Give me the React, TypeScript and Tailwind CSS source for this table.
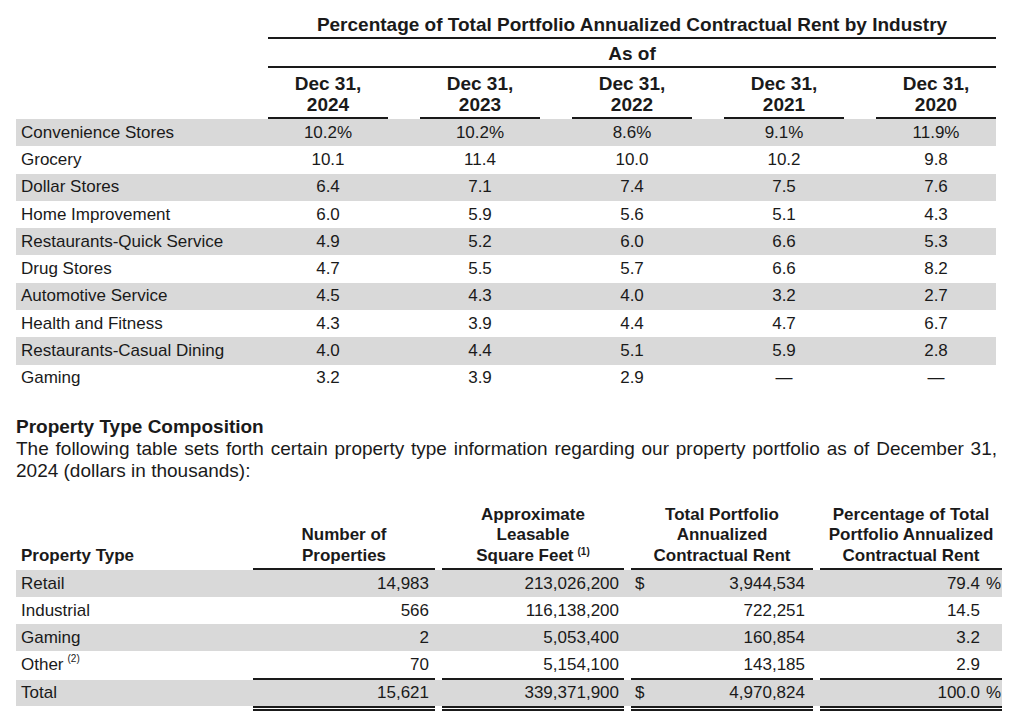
const years = ["2024", "2023", "2022", "2021", "2020"]

const industries: string[][] = [
  ["Convenience Stores", "10.2%", "10.2%", "8.6%", "9.1%", "11.9%"],
  ["Grocery", "10.1", "11.4", "10.0", "10.2", "9.8"],
  ["Dollar Stores", "6.4", "7.1", "7.4", "7.5", "7.6"],
  ["Home Improvement", "6.0", "5.9", "5.6", "5.1", "4.3"],
  ["Restaurants-Quick Service", "4.9", "5.2", "6.0", "6.6", "5.3"],
  ["Drug Stores", "4.7", "5.5", "5.7", "6.6", "8.2"],
  ["Automotive Service", "4.5", "4.3", "4.0", "3.2", "2.7"],
  ["Health and Fitness", "4.3", "3.9", "4.4", "4.7", "6.7"],
  ["Restaurants-Casual Dining", "4.0", "4.4", "5.1", "5.9", "2.8"],
  ["Gaming", "3.2", "3.9", "2.9", "—", "—"],
]

interface PropertyRow {
  type: string
  note?: string
  count: string
  sqft: string
  dollar?: boolean
  rent: string
  pct: string
  pctSign?: boolean
}

const properties: PropertyRow[] = [
  { type: "Retail", count: "14,983", sqft: "213,026,200", dollar: true, rent: "3,944,534", pct: "79.4", pctSign: true },
  { type: "Industrial", count: "566", sqft: "116,138,200", rent: "722,251", pct: "14.5" },
  { type: "Gaming", count: "2", sqft: "5,053,400", rent: "160,854", pct: "3.2" },
  { type: "Other", note: "(2)", count: "70", sqft: "5,154,100", rent: "143,185", pct: "2.9" },
]

const total: PropertyRow = {
  type: "Total",
  count: "15,621",
  sqft: "339,371,900",
  dollar: true,
  rent: "4,970,824",
  pct: "100.0",
  pctSign: true,
}

const topGrid = "grid grid-cols-[252px_152px_152px_152px_152px_120px]"
const bottomGrid = "grid grid-cols-[237px_189px_189px_189px_182px]"

function Note({ children }: { children: string }) {
  return <span className="relative -top-[6px] ml-[4px] text-[10px] leading-none align-baseline">{children}</span>
}

function PropertyCells({ row }: { row: PropertyRow }) {
  return (
    <>
      <div className="flex items-center pl-[5px]">
        {row.type}
        {row.note && <Note>{row.note}</Note>}
      </div>
      <div className="w-[182px] flex items-center justify-end pr-[6px]">{row.count}</div>
      <div className="w-[182px] flex items-center justify-end pr-[5px]">{row.sqft}</div>
      <div className="w-[182px] flex items-center justify-between pl-[4px] pr-[8px]">
        <span>{row.dollar ? "$" : ""}</span>
        <span>{row.rent}</span>
      </div>
      <div className="w-[182px] flex items-center justify-end pr-[1px]">
        <span>{row.pct}</span>
        <span className="w-[21px] text-right">{row.pctSign ? "%" : ""}</span>
      </div>
    </>
  )
}

function RuleRow({ double }: { double?: boolean }) {
  const cls = double ? "w-[182px] h-[5px] border-y-2 border-[#1a1a1a]" : "w-[182px] h-[2px] bg-[#1a1a1a]"
  return (
    <div className={bottomGrid}>
      <div />
      <div className={cls} />
      <div className={cls} />
      <div className={cls} />
      <div className={cls} />
    </div>
  )
}

export default function App() {
  return (
    <div className="min-h-[720px] bg-white text-[#1a1a1a] font-['Liberation_Sans',Arial,sans-serif] pl-[16px]">
      {/* industry table */}
      <div className="w-[980px]">
        <div className="ml-[252px] w-[728px] pt-[14px]">
          <div className="text-[19px] leading-[22px] font-bold text-center pb-[1px] border-b-2 border-[#1a1a1a]">
            Percentage of Total Portfolio Annualized Contractual Rent by Industry
          </div>
          <div className="text-[19px] leading-[22px] font-bold text-center pt-[4px] pb-[1px] border-b-2 border-[#1a1a1a]">
            As of
          </div>
        </div>
        <div className={`${topGrid} pt-[5px]`}>
          <div />
          {years.map((y) => (
            <div key={y} className="w-[120px] text-center text-[19px] leading-[21px] font-bold pb-[2px] border-b-2 border-[#1a1a1a]">
              Dec 31,
              <br />
              {y}
            </div>
          ))}
        </div>
        {industries.map((row, i) => (
          <div key={row[0]} className={`${topGrid} h-[27.3px] text-[17px] leading-[20px] ${i % 2 === 0 ? "bg-[#d9d9d9]" : ""}`}>
            <div className="flex items-center pl-[5px]">{row[0]}</div>
            {row.slice(1).map((v, j) => (
              <div key={j} className="w-[120px] flex items-center justify-center">
                {v}
              </div>
            ))}
          </div>
        ))}
      </div>

      {/* property type section */}
      <div className="mt-[24px] w-[981px]">
        <h2 className="text-[19px] leading-[22px] font-bold">Property Type Composition</h2>
        <p className="text-[19px] leading-[22px] text-justify">
          The following table sets forth certain property type information regarding our property portfolio as of December 31, 2024 (dollars in thousands):
        </p>
      </div>

      <div className="mt-[23px] w-[986px] text-[17px]">
        <div className={`${bottomGrid} items-end font-bold leading-[20.5px]`}>
          <div className="pl-[5px] pb-[2px] border-b-2 border-transparent">Property Type</div>
          <div className="w-[182px] text-center pb-[2px] border-b-2 border-[#1a1a1a]">
            Number of
            <br />
            Properties
          </div>
          <div className="w-[182px] text-center pb-[2px] border-b-2 border-[#1a1a1a]">
            Approximate
            <br />
            Leasable
            <br />
            Square Feet<Note>(1)</Note>
          </div>
          <div className="w-[182px] text-center pb-[2px] border-b-2 border-[#1a1a1a]">
            Total Portfolio
            <br />
            Annualized
            <br />
            Contractual Rent
          </div>
          <div className="w-[182px] text-center pb-[2px] border-b-2 border-[#1a1a1a]">
            Percentage of Total
            <br />
            Portfolio Annualized
            <br />
            Contractual Rent
          </div>
        </div>
        {properties.map((row, i) => (
          <div key={row.type} className={`${bottomGrid} h-[27px] leading-[20px] ${i % 2 === 0 ? "bg-[#d9d9d9]" : ""}`}>
            <PropertyCells row={row} />
          </div>
        ))}
        <RuleRow />
        <div className={`${bottomGrid} h-[26px] leading-[20px] bg-[#d9d9d9]`}>
          <PropertyCells row={total} />
        </div>
        <RuleRow double />
      </div>
    </div>
  )
}
